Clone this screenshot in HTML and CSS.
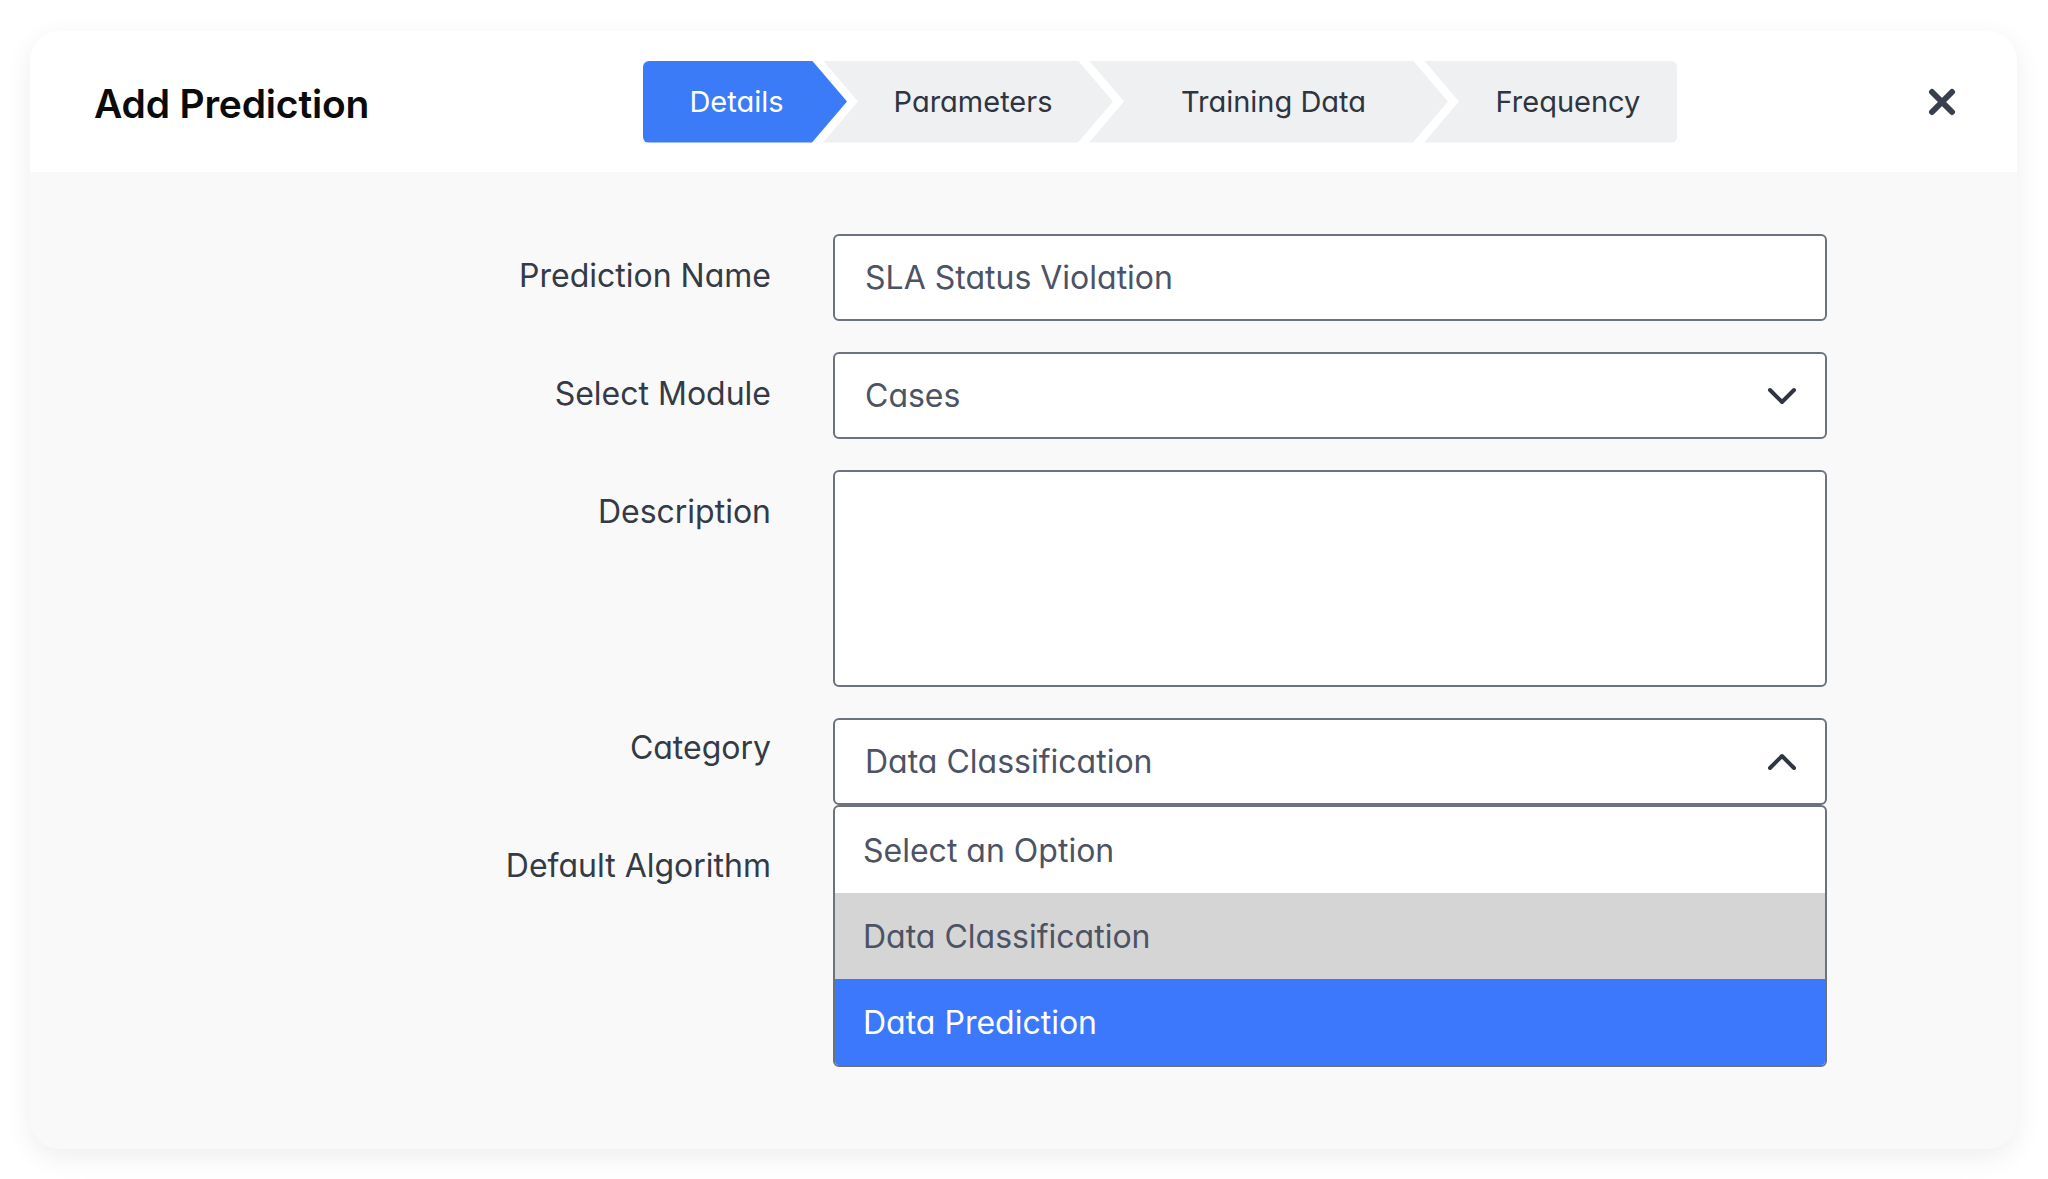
FILE: index.html
```html
<!DOCTYPE html>
<html>
<head>
<meta charset="utf-8">
<link rel="stylesheet" href="styles.css">
<title>Add Prediction</title>
</head>
<body>
<div class="modal">
  <div class="modal-head">
    <h1 class="modal-title">Add Prediction</h1>
    <ol class="steps">
      <li class="step step-first active">Details</li>
      <li class="step">Parameters</li>
      <li class="step step-wide">Training Data</li>
      <li class="step step-last">Frequency</li>
    </ol>
    <button class="close" type="button" aria-label="Close">
      <svg width="28" height="28" viewBox="0 0 28 28"><path d="M4 4L24 24M24 4L4 24" /></svg>
    </button>
  </div>

  <div class="modal-body">
    <div class="form">
      <label class="label">Prediction Name</label>
      <div class="field">SLA Status Violation</div>

      <label class="label">Select Module</label>
      <div class="field select">
        <span>Cases</span>
        <svg class="chevron" width="30" height="18" viewBox="0 0 30 18"><path d="M3 3L15 15L27 3" /></svg>
      </div>

      <label class="label">Description</label>
      <div class="field area"></div>

      <label class="label label-high">Category</label>
      <div class="select-wrap">
        <div class="field select">
          <span>Data Classification</span>
          <svg class="chevron" width="30" height="18" viewBox="0 0 30 18"><path d="M3 15L15 3L27 15" /></svg>
        </div>
        <ul class="menu">
          <li class="option">Select an Option</li>
          <li class="option hover">Data Classification</li>
          <li class="option selected">Data Prediction</li>
        </ul>
      </div>

      <label class="label label-high">Default Algorithm</label>
      <div class="field select"></div>
    </div>
  </div>
</div>
</body>
</html>
```

FILE: styles.css
```css
html, body { margin: 0; padding: 0; }

body {
  background: #fff;
  font-family: Inter, "Open Sans", sans-serif;
  font-feature-settings: "cv11";
  color: #3a404c;
  padding: 31px 31px 30px 30px;
  height: 100vh;
  box-sizing: border-box;
}

.modal {
  height: 100%;
  display: flex;
  flex-direction: column;
  border-radius: 30px;
  background: #f9f9f9;
  box-shadow: 0 8px 28px rgba(0,0,0,0.07);
  overflow: hidden;
}

.modal-head {
  height: 141px;
  flex: none;
  background: #fff;
  display: flex;
  align-items: center;
  padding: 0 61px 0 64px;
}

.modal-title {
  flex: 0 0 549px;
  margin: 0;
  font-size: 39px;
  font-weight: 600;
  color: #0b0b0b;
  letter-spacing: -0.2px;
  position: relative;
  top: 2px;
}

/* stepper */
.steps {
  list-style: none;
  margin: 0;
  padding: 0;
  display: flex;
  height: 82px;
}

.step {
  height: 82px;
  display: flex;
  align-items: center;
  justify-content: center;
  background: #eff0f2;
  color: #2e3440;
  font-size: 29px;
  width: 290px;
  padding: 0 30px 0 40px;
  box-sizing: border-box;
  margin-left: -24px;
  clip-path: polygon(0 0, calc(100% - 35px) 0, 100% 50%, calc(100% - 35px) 100%, 0 100%, 35px 50%);
}

.step-first {
  margin-left: 0;
  width: 204px;
  padding: 0 35px 0 18px;
  border-radius: 6px 0 0 6px;
  clip-path: polygon(0 0, calc(100% - 35px) 0, 100% 50%, calc(100% - 35px) 100%, 0 100%);
}

.step-wide { width: 359px; }

.step-last {
  width: 253px;
  padding: 0 0 0 35px;
  border-radius: 0 6px 6px 0;
  clip-path: polygon(0 0, 100% 0, 100% 100%, 0 100%, 35px 50%);
}

.step.active {
  background: #3b7bf8;
  color: #fff;
}

.close {
  margin-left: auto;
  border: 0;
  background: none;
  padding: 0;
  width: 28px;
  height: 28px;
  cursor: pointer;
}

.close svg path {
  stroke: #383f4d;
  stroke-width: 6;
  stroke-linecap: round;
  fill: none;
}

/* form */
.modal-body {
  flex: 1;
  padding-top: 62px;
}

.form {
  display: grid;
  grid-template-columns: 741px 994px;
  column-gap: 62px;
  row-gap: 31px;
}

.label {
  text-align: right;
  font-size: 32px;
  color: #343a46;
  padding-top: 23px;
  line-height: 38px;
}

.label-high { padding-top: 11px; }

.field {
  height: 87px;
  box-sizing: border-box;
  border: 2px solid #6c727e;
  border-radius: 6px;
  background: #fff;
  display: flex;
  align-items: center;
  padding: 0 30px;
  font-size: 32px;
  color: #4c5364;
}

.field.area { height: 217px; }

.select { justify-content: space-between; }

.chevron path {
  stroke: #2f3542;
  stroke-width: 4;
  stroke-linecap: round;
  stroke-linejoin: round;
  fill: none;
}

.chevron { margin-right: -2px; }

.select-wrap { position: relative; }

.menu {
  position: absolute;
  left: 0;
  right: 0;
  top: 87px;
  z-index: 2;
  list-style: none;
  margin: 0;
  padding: 0;
  background: #fff;
  border: 2px solid #6c727e;
  border-radius: 6px;
  overflow: hidden;
}

.option {
  height: 86px;
  display: flex;
  align-items: center;
  padding: 0 28px;
  font-size: 32px;
  color: #4c5364;
}

.option.hover { background: #d5d5d5; }

.option.selected {
  background: #3b78fb;
  color: #fff;
}
```
